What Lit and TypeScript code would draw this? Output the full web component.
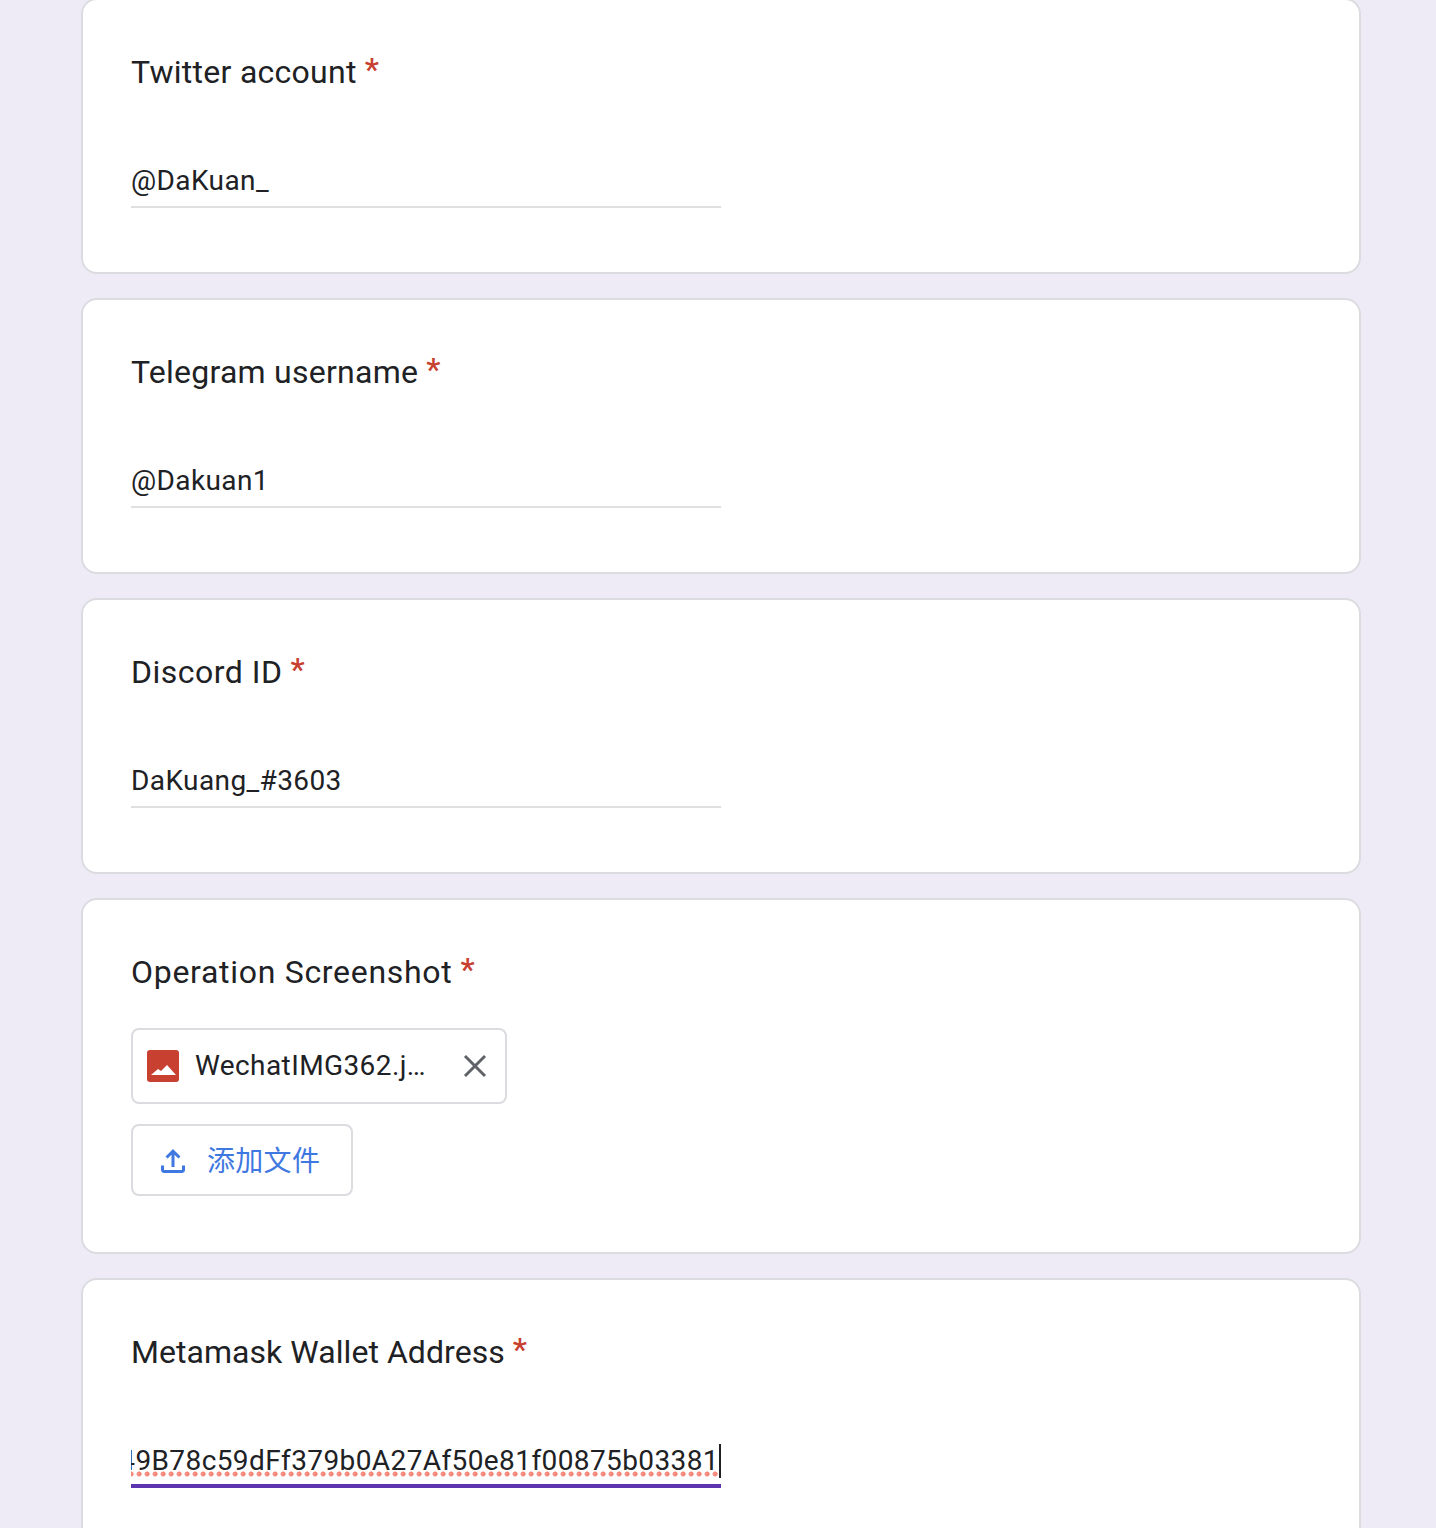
import { LitElement, html, css } from 'lit';
import { customElement } from 'lit/decorators.js';

const textCards = [
  { title: 'Twitter account', value: '@DaKuan_', spacing: 0.27 },
  { title: 'Telegram username', value: '@Dakuan1', spacing: 0.25 },
  { title: 'Discord ID', value: 'DaKuang_#3603', spacing: 0.5 },
];

@customElement('app-root')
export class AppRoot extends LitElement {
  static styles = css`
    :host {
      display: block;
      height: 1528px;
      overflow: hidden;
      background: #eeebf6;
      font-family: Roboto, 'Noto Sans CJK SC', sans-serif;
      color: #202124;
    }
    .page {
      display: flex;
      flex-direction: column;
      gap: 24px;
      width: 1280px;
      margin: -2px auto 0 81px;
    }
    .card {
      box-sizing: border-box;
      height: 276px;
      background: #fff;
      border: 2px solid #dadce0;
      border-radius: 16px;
      padding: 48px;
    }
    .card.upload { height: 356px; }
    .card.wallet { height: 300px; }
    .title {
      font-size: 32px;
      line-height: 48px;
      height: 48px;
    }
    .req {
      color: #c8402f;
      margin-left: 8px;
      font-weight: 500;
      letter-spacing: 0;
      line-height: 0;
      vertical-align: 3px;
    }
    .field {
      width: 590px;
      margin-top: 66px;
      height: 44px;
      border-bottom: 2px solid #e0e0e0;
      font-size: 28px;
      line-height: 38px;
      letter-spacing: 0.4px;
      white-space: nowrap;
      overflow: hidden;
    }
    .wallet .field {
      display: flex;
      justify-content: flex-end;
      border-bottom: 4px solid #5e35b1;
      height: 42px;
    }
    .addr {
      flex: none;
      display: block;
      height: 35px;
      background: radial-gradient(circle at center, #f58a7e 2.3px, transparent 2.8px) right bottom / 8px 6px repeat-x;
    }
    .caret {
      flex: none;
      width: 2px;
      height: 34px;
      margin-top: 2px;
      background: #202124;
    }
    .file {
      box-sizing: border-box;
      width: 376px;
      height: 76px;
      margin-top: 32px;
      border: 2px solid #dadce0;
      border-radius: 8px;
      display: flex;
      align-items: center;
      padding: 0 14px;
      font-size: 28px;
      letter-spacing: 0.4px;
    }
    .file svg.img { flex: none; margin-right: 16px; }
    .file .name { flex: 1; margin-bottom: 2px; }
    .add {
      box-sizing: border-box;
      width: 222px;
      height: 72px;
      margin-top: 20px;
      border: 2px solid #dadce0;
      border-radius: 8px;
      display: flex;
      align-items: center;
      gap: 16px;
      padding-left: 22px;
      color: #3f78e0;
      font-size: 28px;
      letter-spacing: 0.3px;
    }
    .add svg { flex: none; margin-top: 2px; }
    .add span { margin-bottom: 3px; }
  `;

  private head(title: string, spacing: number) {
    return html`<div class="title" style="letter-spacing:${spacing}px">${title}<span class="req">*</span></div>`;
  }

  render() {
    return html`
      <div class="page">
        ${textCards.map(
          (c) => html`<div class="card">
            ${this.head(c.title, c.spacing)}
            <div class="field">${c.value}</div>
          </div>`
        )}
        <div class="card upload">
          ${this.head('Operation Screenshot', 0.7)}
          <div class="file">
            <svg class="img" width="32" height="32" viewBox="0 0 32 32">
              <rect width="32" height="32" rx="3" fill="#c8402f"></rect>
              <path d="M4 25l7-6 3 2 6-6 9 10z" fill="#fff"></path>
            </svg>
            <span class="name">WechatIMG362.j…</span>
            <svg width="32" height="32" viewBox="0 0 32 32" fill="none" stroke="#5f6368" stroke-width="3">
              <path d="M6 6l20 20M26 6L6 26"></path>
            </svg>
          </div>
          <div class="add">
            <svg width="36" height="36" viewBox="0 0 24 24" fill="#3f78e0">
              <path d="M18 15v3H6v-3H4v3c0 1.1.9 2 2 2h12c1.1 0 2-.9 2-2v-3h-2zM7 9l1.41 1.41L11 7.83V16h2V7.83l2.59 2.58L17 9l-5-5-5 5z"></path>
            </svg>
            <span>添加文件</span>
          </div>
        </div>
        <div class="card wallet">
          ${this.head('Metamask Wallet Address', 0.05)}
          <div class="field">
            <span class="addr">0x49B78c59dFf379b0A27Af50e81f00875b03381</span><span class="caret"></span>
          </div>
        </div>
      </div>
    `;
  }
}
